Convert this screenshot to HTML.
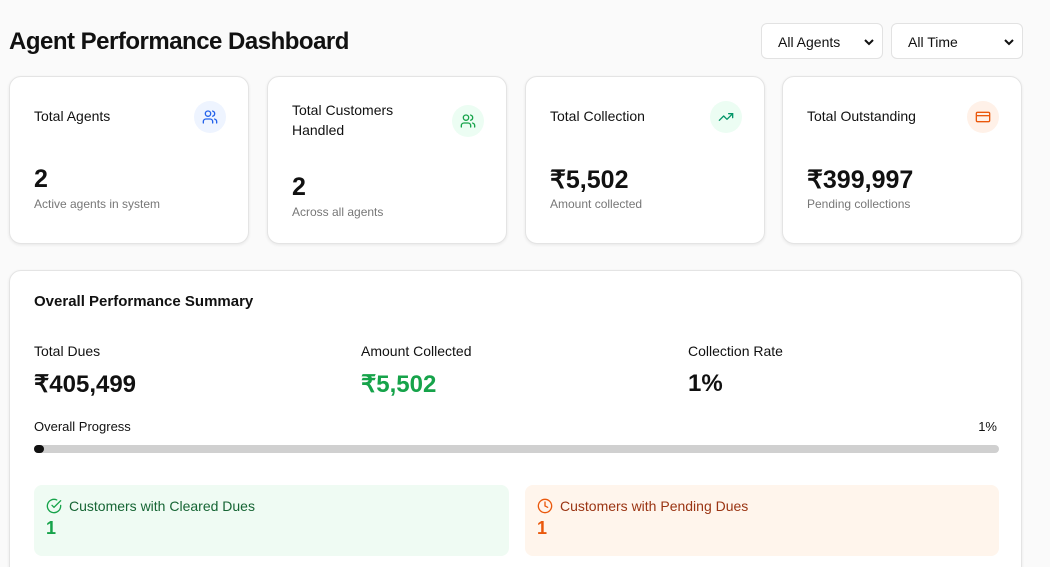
<!DOCTYPE html>
<html><head><meta charset="utf-8"><style>
*{box-sizing:border-box;margin:0;padding:0}
html,body{width:1050px;height:567px;overflow:hidden}
body{background:#fafafa;font-family:"Liberation Sans",sans-serif;color:#111;position:relative}
h1{position:absolute;left:9px;top:28px;font-size:24px;font-weight:700;letter-spacing:-0.5px}
.sel{position:absolute;top:23px;height:36px;background:#fff;border:1px solid #e2e2e2;border-radius:6px;font-size:14px;padding:10px 0 0 16px}
.sel svg{position:absolute;right:8px;top:14px}
.card{position:absolute;top:76px;width:240px;height:168px;background:#fff;border:1px solid #e4e4e4;border-radius:12px;box-shadow:0 1px 3px rgba(0,0,0,.08)}
.card .t{position:absolute;left:24px;top:29px;font-size:14px;line-height:20px;font-weight:500}
.card .ic{position:absolute;left:184px;top:24px;width:32px;height:32px;border-radius:50%;display:flex;align-items:center;justify-content:center}
.card .v{position:absolute;left:24px;top:88px;font-size:25px;font-weight:700}
.card .s{position:absolute;left:24px;top:120px;font-size:12px;color:#777}
.big{position:absolute;left:9px;top:270px;width:1013px;height:320px;background:#fff;border:1px solid #e4e4e4;border-radius:12px;box-shadow:0 1px 3px rgba(0,0,0,.08)}
.lbl{position:absolute;font-size:14px}
.num{position:absolute;font-size:24px;font-weight:700}
.box{position:absolute;top:214px;height:71px;border-radius:8px;padding:13px 12px}
.box .h{font-size:14px;display:flex;align-items:center;gap:7px}
.box .n{font-size:18px;font-weight:700;margin-top:4px}
</style></head><body>
<h1>Agent Performance Dashboard</h1>
<div class="sel" style="left:761px;width:122px">All Agents<svg width="10" height="8" viewBox="0 0 10 8"><path d="M1 2l4 4 4-4" stroke="#111" stroke-width="2" fill="none"/></svg></div>
<div class="sel" style="left:891px;width:132px">All Time<svg width="10" height="8" viewBox="0 0 10 8"><path d="M1 2l4 4 4-4" stroke="#111" stroke-width="2" fill="none"/></svg></div>

<div class="card" style="left:9px"><div class="t">Total Agents</div><div class="ic" style="background:#eef4ff"><svg width="16" height="16" viewBox="0 0 24 24" fill="none" stroke="#2563eb" stroke-width="2" stroke-linecap="round"><path d="M16 21v-2a4 4 0 0 0-4-4H6a4 4 0 0 0-4 4v2"/><circle cx="9" cy="7" r="4"/><path d="M22 21v-2a4 4 0 0 0-3-3.87M16 3.13a4 4 0 0 1 0 7.75"/></svg></div><div class="v">2</div><div class="s">Active agents in system</div></div>
<div class="card" style="left:267px"><div class="t" style="top:23px">Total Customers<br>Handled</div><div class="ic" style="background:#ecfdf3;top:28px"><svg width="16" height="16" viewBox="0 0 24 24" fill="none" stroke="#16a34a" stroke-width="2" stroke-linecap="round"><path d="M16 21v-2a4 4 0 0 0-4-4H6a4 4 0 0 0-4 4v2"/><circle cx="9" cy="7" r="4"/><path d="M22 21v-2a4 4 0 0 0-3-3.87M16 3.13a4 4 0 0 1 0 7.75"/></svg></div><div class="v" style="top:96px">2</div><div class="s" style="top:128px">Across all agents</div></div>
<div class="card" style="left:525px"><div class="t">Total Collection</div><div class="ic" style="background:#ecfdf3"><svg width="16" height="16" viewBox="0 0 24 24" fill="none" stroke="#059669" stroke-width="2" stroke-linecap="round" stroke-linejoin="round"><path d="M22 7l-8.5 8.5-5-5L2 17"/><path d="M16 7h6v6"/></svg></div><div class="v">₹5,502</div><div class="s">Amount collected</div></div>
<div class="card" style="left:782px"><div class="t">Total Outstanding</div><div class="ic" style="background:#fff1e8"><svg width="16" height="16" viewBox="0 0 24 24" fill="none" stroke="#ea580c" stroke-width="2"><rect x="2" y="5" width="20" height="14" rx="2"/><path d="M2 10h20"/></svg></div><div class="v">₹399,997</div><div class="s">Pending collections</div></div>

<div class="big">
<div class="lbl" style="left:24px;top:22px;font-size:15px;font-weight:600">Overall Performance Summary</div>
<div class="lbl" style="left:24px;top:72px">Total Dues</div><div class="num" style="left:24px;top:99px">₹405,499</div>
<div class="lbl" style="left:351px;top:72px">Amount Collected</div><div class="num" style="left:351px;top:99px;color:#16a34a">₹5,502</div>
<div class="lbl" style="left:678px;top:72px">Collection Rate</div><div class="num" style="left:678px;top:99px">1%</div>
<div class="lbl" style="left:24px;top:148px;font-size:13px">Overall Progress</div><div class="lbl" style="right:24px;top:148px;font-size:13px">1%</div>
<div style="position:absolute;left:24px;top:174px;width:965px;height:8px;background:#d0d0d0;border-radius:4px"><div style="width:10px;height:8px;background:#111;border-radius:4px"></div></div>
<div class="box" style="left:24px;width:475px;background:#effbf3"><div class="h" style="color:#166534"><svg width="16" height="16" viewBox="0 0 24 24" fill="none" stroke="#16a34a" stroke-width="2" stroke-linecap="round"><path d="M22 11.1V12a10 10 0 1 1-5.9-9.1"/><path d="M22 4L12 14l-3-3"/></svg>Customers with Cleared Dues</div><div class="n" style="color:#16a34a">1</div></div>
<div class="box" style="left:515px;width:474px;background:#fff5ec"><div class="h" style="color:#9a3412"><svg width="16" height="16" viewBox="0 0 24 24" fill="none" stroke="#ea580c" stroke-width="2" stroke-linecap="round"><circle cx="12" cy="12" r="10"/><path d="M12 6v6l4 2"/></svg>Customers with Pending Dues</div><div class="n" style="color:#ea580c">1</div></div>
</div>
</body></html>
